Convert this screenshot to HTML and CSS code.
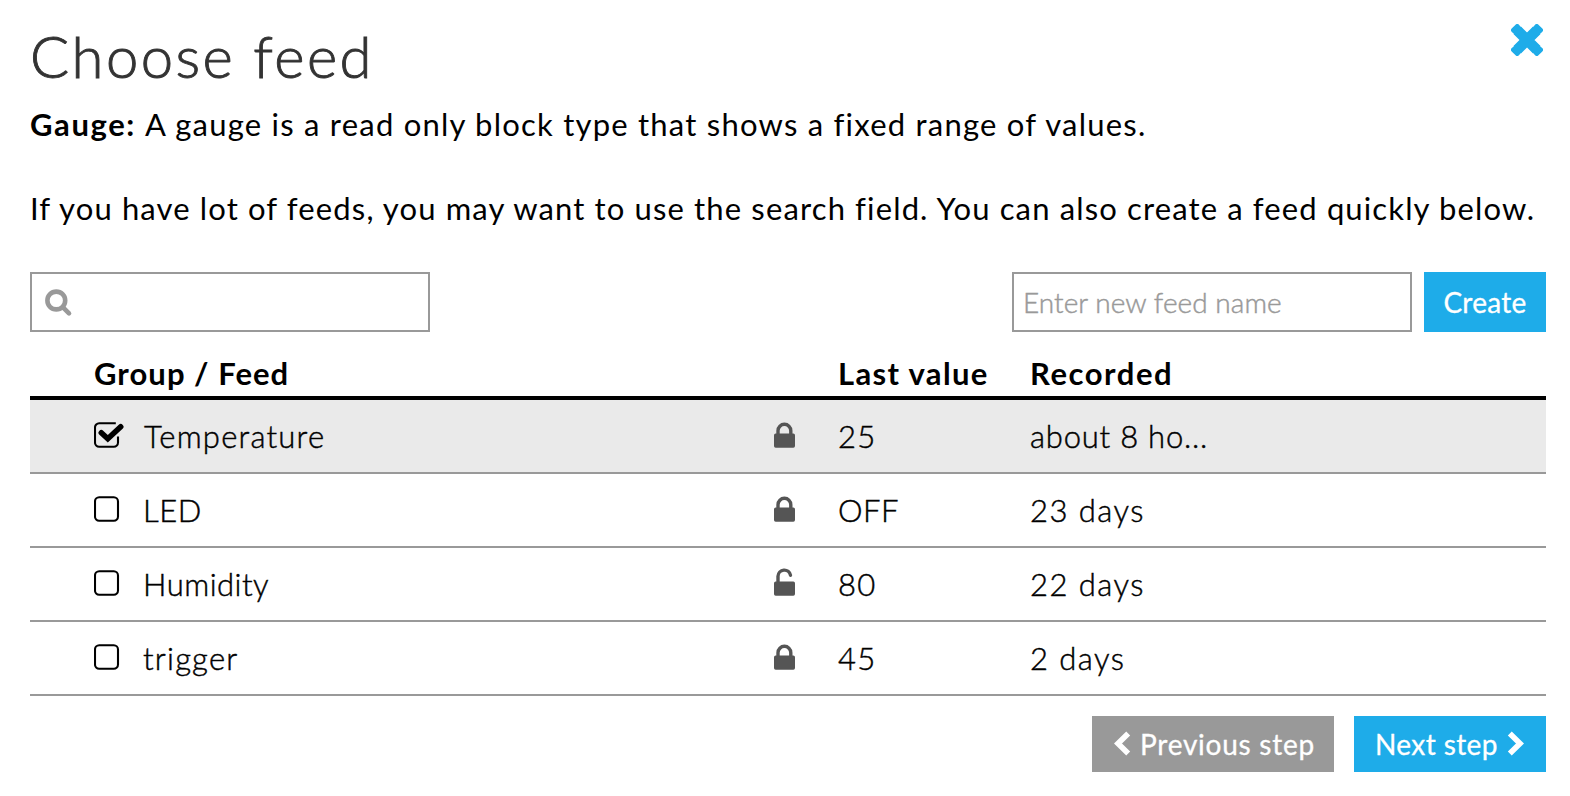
FILE: index.html
```
<!DOCTYPE html>
<html lang="en">
<head>
<meta charset="utf-8">
<title>Choose feed</title>
<link rel="stylesheet" href="styles.css">
</head>
<body>
<svg class="sprite" width="0" height="0">
  <symbol id="box" viewBox="0 0 30 26"><rect x="1" y="1.3" width="23" height="23.4" rx="4.2" fill="none" stroke="#000" stroke-width="2.1"/></symbol>
  <symbol id="checked" viewBox="0 0 30 26"><path d="M21.800 1.300H5.200A4.200 4.200 0 0 0 1 5.500V20.500a4.200 4.200 0 0 0 4.200 4.200H19.800a4.200 4.200 0 0 0 4.200-4.200V14.500" fill="none" stroke="#000" stroke-width="2.100"/><path d="M7.300 10.800l6.500 6L26.700 4.800" fill="none" stroke="#000" stroke-width="5.600" stroke-linejoin="miter" stroke-linecap="round"/></symbol>
  <symbol id="lock" viewBox="0 0 21 28"><rect y="13.600" width="21" height="14.200" rx="1.700" fill="#555"/><path d="M4 15V10.700a6.400 6.400 0 0 1 12.800 0V15" fill="none" stroke="#555" stroke-width="3.400"/></symbol>
  <symbol id="unlock" viewBox="0 0 21 28"><rect y="13.600" width="21" height="14.200" rx="1.700" fill="#555"/><path d="M4 15V8.300a6.300 6.300 0 0 1 12.500-1" fill="none" stroke="#555" stroke-width="3.400" stroke-linecap="round"/></symbol>
</svg>
<main class="dialog">
  <header class="top">
    <h1 class="title">Choose feed</h1>
    <svg class="close" viewBox="0 0 32 32"><path d="M6.200 6.200L25.800 25.800M25.800 6.200L6.200 25.800" stroke="#1eace9" stroke-width="10.600"/><path d="M6.200 2.300L2.300 6.200L6.200 9.500L9.500 6.200ZM25.800 2.300L29.700 6.200L25.800 9.500L22.500 6.200ZM2.300 25.800L6.200 29.700L9.500 25.800L6.200 22.500ZM29.700 25.800L25.800 29.700L22.500 25.800L25.800 22.500Z" fill="#1eace9" stroke="#1eace9" stroke-width="4.600" stroke-linejoin="round"/></svg>
  </header>
  <p class="intro"><b class="kind">Gauge:</b> <span class="about">A gauge is a read only block type that shows a fixed range of values.</span></p>
  <p class="intro hint">If you have lot of feeds, you may want to use the search field. You can also create a feed quickly below.</p>

  <div class="controls">
    <div class="field search">
      <svg class="glass" viewBox="0 0 28 28"><circle cx="11.300" cy="11.500" r="8.900" fill="none" stroke="#999" stroke-width="4.600"/><path d="M18 18.300l6 6" stroke="#999" stroke-width="4.600" stroke-linecap="round"/></svg>
    </div>
    <div class="create">
      <div class="field name">Enter new feed name</div>
      <div class="button create-button">Create</div>
    </div>
  </div>

  <div class="feeds">
    <div class="grid head"><span class="wide group">Group / Feed</span><span class="last">Last value</span><span class="recorded">Recorded</span></div>
    <div class="grid row selected"><svg class="check"><use href="#checked"/></svg><span>Temperature</span><svg class="lock"><use href="#lock"/></svg><span class="num">25</span><span class="ago">about 8 ho...</span></div>
    <div class="grid row"><svg class="check"><use href="#box"/></svg><span class="feed tight">LED</span><svg class="lock"><use href="#lock"/></svg><span class="tight">OFF</span><span class="days">23 days</span></div>
    <div class="grid row"><svg class="check"><use href="#box"/></svg><span class="feed tight">Humidity</span><svg class="lock"><use href="#unlock"/></svg><span class="num">80</span><span class="days">22 days</span></div>
    <div class="grid row"><svg class="check"><use href="#box"/></svg><span class="feed">trigger</span><svg class="lock"><use href="#lock"/></svg><span class="num">45</span><span class="days">2 days</span></div>
  </div>

  <footer class="steps">
    <div class="button step previous"><svg class="chevron" viewBox="0 0 17 26"><path d="M14.200 2.500L4 12.500l10.200 10" fill="none" stroke="#fff" stroke-width="5.600"/></svg><span>Previous step</span></div>
    <div class="button step next"><span>Next step</span><svg class="chevron" viewBox="0 0 17 26"><path d="M2.800 2.500l10.200 10-10.200 10" fill="none" stroke="#fff" stroke-width="5.600"/></svg></div>
  </footer>
</main>
</body>
</html>
```
FILE: styles.css
```
* { box-sizing: border-box; }
body { margin: 0; background: #fff; color: #000; font: 400 31px/42px Lato, sans-serif; }
svg { display: block; }
.sprite { position: absolute; }
.dialog { width: 1570px; height: 796px; padding: 24px 24px 0 30px; overflow: hidden; }
.top { display: flex; justify-content: space-between; height: 79px; padding-right: 3px; }
.title { margin: 2px 0 0; color: #333; font-size: 58px; font-weight: 300; line-height: 60px; letter-spacing: 2.4px; -webkit-text-stroke: 0.9px #333; }
.close { width: 32px; height: 32px; }
.intro { margin: 0 0 42px; white-space: nowrap; letter-spacing: 1.09px; }
.intro.hint { margin-bottom: 43px; letter-spacing: 1.13px; }
.kind { letter-spacing: 1.6px; }
.about { letter-spacing: 1.22px; }
.controls { display: flex; justify-content: space-between; height: 60px; }
.field { width: 400px; height: 60px; border: 2px solid #999; }
.search { padding: 15px 14px 13px 13px; }
.glass { width: 28px; height: 28px; }
.create { display: flex; gap: 12px; }
.name { padding-left: 9px; color: #999; font-size: 28px; font-weight: 300; line-height: 57px; letter-spacing: 0.05px; -webkit-text-stroke: 0.45px #999; }
.button { color: #fff; background: #1eace9; font-size: 28px; -webkit-text-stroke: 0.3px #fff; }
.create-button { width: 122px; line-height: 61px; text-align: center; letter-spacing: 0.25px; }
.grid { display: grid; grid-template-columns: 50px 630px 64px 192px 1fr; padding-left: 64px; align-items: center; white-space: nowrap; }
.head { height: 68px; padding-top: 17px; border-bottom: 4px solid #000; font-weight: 700; }
.wide { grid-column: span 3; }
.group { letter-spacing: 1.05px; }
.last { letter-spacing: 1.35px; }
.recorded { letter-spacing: 1.55px; }
.row { height: 74px; border-bottom: 2px solid #999; font-weight: 300; letter-spacing: 1.22px; -webkit-text-stroke: 0.45px #000; }
.selected { background: #eaeaea; }
.check { width: 30px; height: 26px; margin-bottom: 2px; }
.lock { width: 21px; height: 28px; margin-bottom: 4px; }
.feed { margin-left: -1px; }
.tight { letter-spacing: 0.5px; }
.ago { letter-spacing: 0.78px; }
.days { letter-spacing: 1.45px; }
.steps { display: flex; justify-content: flex-end; gap: 20px; margin-top: 20px; }
.step { display: flex; align-items: center; height: 56px; padding-bottom: 1px; white-space: nowrap; }
.chevron { width: 17px; height: 26px; }
.previous { width: 242px; padding-left: 22px; gap: 9px; background: #999; letter-spacing: 0.75px; }
.next { width: 192px; padding-left: 21px; gap: 9px; letter-spacing: 0.4px; }
```
